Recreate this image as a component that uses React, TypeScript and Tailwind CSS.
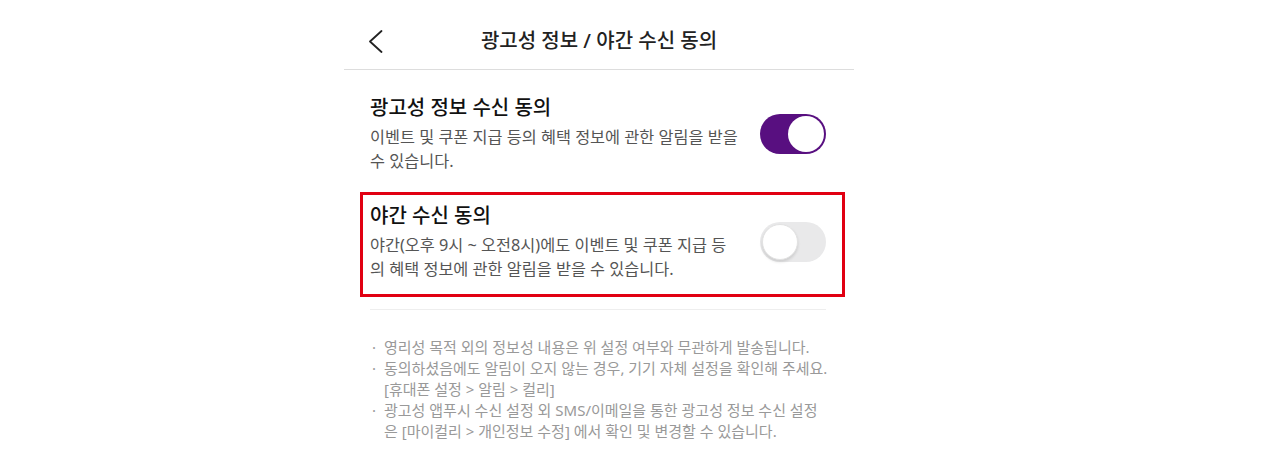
const font = { fontFamily: '"Noto Sans", "Noto Sans CJK KR", sans-serif' }

function Toggle({ on }: { on: boolean }) {
  if (on) {
    return (
      <div className="flex h-[40px] w-[66px] shrink-0 items-center justify-end rounded-full bg-[#580f80] p-[2px]">
        <div className="h-[36px] w-[36px] rounded-full bg-white" />
      </div>
    )
  }
  return (
    <div className="flex h-[40px] w-[66px] shrink-0 items-center justify-start rounded-full bg-[#e9e9ea] p-[2px]">
      <div className="h-[36px] w-[36px] rounded-full border border-[#e2e2e2] bg-white shadow-[0_2px_3px_rgba(0,0,0,0.12)]" />
    </div>
  )
}

function Setting({ title, desc, on }: { title: string; desc: string; on: boolean }) {
  return (
    <div className="flex items-center justify-between">
      <div className="w-[370px]">
        <h2 className="text-[20px] leading-[28px] font-medium text-[#111]">{title}</h2>
        <p className="mt-[3px] break-all text-[16.3px] leading-[24px] text-[#555]">{desc}</p>
      </div>
      <Toggle on={on} />
    </div>
  )
}

export default function App() {
  const notes = [
    '영리성 목적 외의 정보성 내용은 위 설정 여부와 무관하게 발송됩니다.',
    '동의하셨음에도 알림이 오지 않는 경우, 기기 자체 설정을 확인해 주세요. [휴대폰 설정 > 알림 > 컬리]',
    '광고성 앱푸시 수신 설정 외 SMS/이메일을 통한 광고성 정보 수신 설정은 [마이컬리 > 개인정보 수정] 에서 확인 및 변경할 수 있습니다.',
  ]

  return (
    <div className="min-h-[473px] w-full bg-white" style={font}>
      <div className="ml-[344px] w-[510px]">
        <header className="relative flex h-[70px] items-center justify-center border-b border-[#dddddd] pt-[13px]">
          <button className="absolute left-[24px] top-[30px] text-[#222]">
            <svg width="15" height="23" viewBox="0 0 15 23" fill="none">
              <path d="M13.5 1 2 11.5 13.5 22" stroke="currentColor" strokeWidth="1.8" strokeLinecap="round" strokeLinejoin="round" />
            </svg>
          </button>
          <h1 className="text-[20px] font-medium text-[#222]">광고성 정보 / 야간 수신 동의</h1>
        </header>

        <div className="pl-[26px] pr-[28px]">
          <div className="pt-[24px]">
            <Setting
              title="광고성 정보 수신 동의"
              desc="이벤트 및 쿠폰 지급 등의 혜택 정보에 관한 알림을 받을 수 있습니다."
              on
            />
          </div>

          <div className="relative mt-[29px] border-b border-[#eeeeee] pb-[28px]">
            <Setting
              title="야간 수신 동의"
              desc="야간(오후 9시 ~ 오전8시)에도 이벤트 및 쿠폰 지급 등의 혜택 정보에 관한 알림을 받을 수 있습니다."
              on={false}
            />
            <div className="pointer-events-none absolute left-[-10px] right-[-19px] top-[-10px] bottom-[12px] border-[3px] border-[#e10012]" />
          </div>

          <ul className="mt-[27px] text-[15px] leading-[21px] text-[#999]">
            {notes.map((n) => (
              <li key={n} className="flex">
                <span className="w-[14px] shrink-0 pl-[2px]">·</span>
                <span className="w-[446px] shrink-0 break-all">{n}</span>
              </li>
            ))}
          </ul>
        </div>
      </div>
    </div>
  )
}
